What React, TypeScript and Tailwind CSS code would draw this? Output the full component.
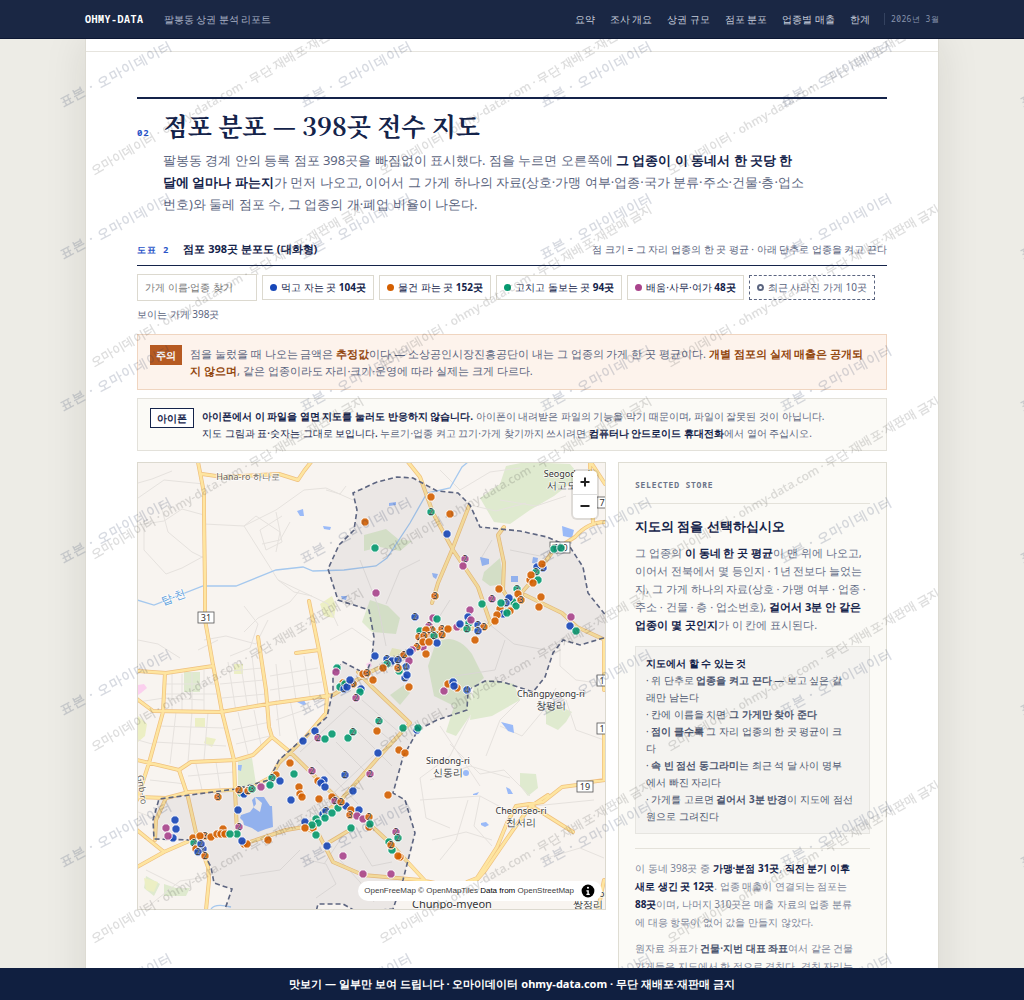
import type { ReactNode } from "react";

type Tone = "blue" | "orange" | "green" | "purple";
type Pin = [x: number, y: number, tone: Tone, count?: number];

const toneFill: Record<Tone, string> = {
  blue: "#1747b8",
  orange: "#d45f00",
  green: "#069a70",
  purple: "#a9448c",
};

const navItems = ["요약", "조사 개요", "상권 규모", "점포 분포", "업종별 매출", "한계"];

const filters: { label: string; count: string; dot: string }[] = [
  { label: "먹고 자는 곳", count: "104곳", dot: "bg-[#1747b8]" },
  { label: "물건 파는 곳", count: "152곳", dot: "bg-[#d45f00]" },
  { label: "고치고 돌보는 곳", count: "94곳", dot: "bg-[#069a70]" },
  { label: "배움·사무·여가", count: "48곳", dot: "bg-[#a9448c]" },
];

const minorRoads = [
  "M138 483l14-4 20-8M204 484l-40-4-26 18M204 515l-22-6-18 12-26 4M144 520v30l22 24 16-6 22-12M160 502l8 30 24 20 12 6",
  "M204 524l40 2 32-16 28-20 22-2 27 12M244 526l34 54 50 24 10 22M244 526l12-10 24 16-4 20M276 512l6 30-16 8-6-20 22-14",
  "M262 544l18-4 10-18M278 580l16 12 18 4M300 590l-10 12-32 16-14 14M244 606l14 18-8 24-20 8M204 640l22-4 30 8 12-24",
  "M326 490l14 4 6-8M330 640l22-12 20 14M204 700l-40-2-26 4M138 640l20 4 22 14M198 650l20-10",
  "M166 684h52M166 694h54M172 674v38M182 674v38M192 672v40M204 670v42M228 662l8 50M240 660l8 50M252 656l6 50",
  "M220 672l42-4M220 684l44-4M222 698l44-4M276 664l4 38M290 660l6 40M304 656l6 40M270 676l48-8M270 690l52-8",
  "M158 726l66 2M154 742l72 4M176 712l-6 52M192 712l-4 50M208 712l-4 48M232 730l38-8M236 744l34-8M238 712l10 42M254 710l8 40",
  "M276 720l34-12M290 700l8 40M276 700l4 36M300 752l50-46 40 34-64 60M316 760l42 44M336 742l38 38M352 726l40 40M362 700l46 40",
  "M138 740l14 4M150 780l36 4M196 764l6 26M216 762l4 26M188 776l46-4M138 812l16 6M146 870l40 20M150 905l30-24 26-4",
  "M440 470l20 20 30-18 30-4M500 500l36 6 30-10M470 505l26 6 30-8M360 560l18 46 8 40M505 640l-10 30-40 6",
  "M484 620l30 24 32 6 18-12M480 560l12-20M510 550l30 6 20-12M420 560l-20 10-14 34M450 600l-14 22",
  "M470 716l-20 40-30 22 6 40 24 10M450 744l30 30 24-4 26 26M430 780l40-14 40 12M420 800l60-4 30 16 20-8",
  "M440 726l40 60M500 726l22 10 20-24 14-24M560 640v26l16 14 28 4M566 700l10 30 28 10M468 800l-12 40-16 20",
  "M480 796l-6 30 18 20M432 840l34-8 26 8M520 700l-20 20-14 36M534 806l60-6M540 860l40-12 24 10",
  "M300 850l-20 20-40 6M300 858l26 6 10 20-20 14M360 846l12 20 20-4M340 860l20 22 14 20M344 834l-20 30",
];

const mainRoads = [
  "M198 462L204 493V515L205 587V620L209 642L213 665L218 690L222 712L234 760L235 790L237 832",
  "M202 474L223 477L279 474L298 480L304 471L311 462",
  "M258 637L266 690L269 727L272 737L290 752L336 797L376 830L390 843L428 884",
  "M309 601L319 650L327 695L326 713L303 740L279 763L271 777L249 789L189 792L166 798L137 797",
  "M296 653L319 650",
  "M137 671L166 673L213 666",
  "M165 673L163 712L149 763L137 800",
  "M137 699L153 711L221 712L268 704L333 695L346 687L366 674L387 664L410 651L428 634L450 628L484 629L498 617L512 604L530 583L553 551L575 537Q588 522 605 522",
  "M137 760L179 770L191 762L236 760L253 755L272 737",
  "M179 770L188 797L197 837L208 867L209 880L206 910",
  "M137 867L164 852L196 838L236 834L244 844L286 830L304 827L319 835L333 862L363 875L420 880L440 884",
  "M137 830L164 852",
  "M166 798L156 820L155 840",
  "M304 827L339 802L376 760L410 723L370 685L358 672",
  "M328 843L353 828",
  "M408 462L420 477L433 513L453 550L478 587L490 622",
  "M469 506L452 550L438 583L432 603",
  "M504 527L498 535L504 563L503 590L510 602",
  "M590 462V470L593 523M592 464L605 484",
  "M525 595L562 613L577 627L605 640",
  "M604 640V690M604 725V780M604 880L598 910",
  "M467 882L477 878L497 847L507 823L516 806L543 802L562 787L577 785L590 782L605 780",
  "M473 884L484 872L513 830L530 807L548 795",
  "M530 805L573 832",
];

const greens = [
  "M480 498l20-14 6-18 20-4 44 2 10 12-26 20-24 14-20 14-16-2z",
  "M364 535l22-6 12 10 14 2-12 10-20-4-16 4z",
  "M370 600l18 6 12 12-4 16-24-2-10-10z",
  "M484 572l16-14 4 26-14 2-8-6z",
  "M436 642q20-10 36 12l12 24-14 12 4 20-18 26-10-4 8-26-20-10-6-30z",
  "M474 684l16-4 24 4 6 16-28 16-22 4z",
  "M520 773l16 1 2 14-10 8-8-10z",
  "M184 672h16v20h-16z",
  "M238 760l14-2 4 26-18 4z",
  "M546 710l14-4 12 6-6 10-8 8-12-6z",
  "M146 876l14 8-6 12-10-8zM164 884l12 4 14 0-4 8-22 0z",
  "M390 695l14-10 6 8-10 12z",
];

const yellowGreens = [
  "M320 604l12-8 4 10-2 12-10-2z",
  "M234 664h9v10h-9z",
  "M195 718h10v9h-10zM206 737l10 2-4 8-8-4z",
  "M138 716l9 8-2 12-7 6z",
  "M144 878l14 4-4 10-8-2z",
  "M392 648l10 2-4 10-10-2z",
];

const waters = [
  "M241 815l9-3 6-8-1-7 9 0 6 9 2 0 1 21-7 2-8 3-6-4-8-3-1-4-3-3zM255 797l-3 3 2 8 6 4 2-9z",
  "M297 511l6-2 1 7-4 0zM323 526l8 1-1 3-6-1z",
  "M341 596l6 0-1 4-4-1z",
  "M562 526l12 4-2 8-9-2z",
  "M480 557l9 2 0 5-7 2zM511 576l7 0 0 6-7 0zM533 557l5 1-1 6-5-1z",
  "M432 573l6 1-2 5-3-2zM389 503l7-1 0 3-7 1z",
  "M501 722l12 3 1 8-6-2zM506 787l4 2 3 5-5 0zM473 794l6-2-2 3-4 0zM481 823l5-1 3 3-4 2-4-2z",
  "M297 702l7-2 2 4-3 1zM238 765l4 0-1 6-3-1z",
];

const district =
  "M377 482L353 493L357 510L354 530L339 545L328 569L338 600L369 610L374 637L372 658L366 674L343 662L333 673L333 690L327 717L279 760L269 780L236 789L159 799L153 820L154 839L191 840L202 850L211 867L214 883L232 889L224 912L316 912L318 904L343 904L357 912L393 909L403 880L415 833L405 800L393 793L403 757L418 730L437 720L467 710L468 690L485 681L503 682L533 692L545 677L553 653L563 640L580 645L607 637V617L588 593L583 567L570 547L547 537L520 531L480 527L470 505L458 493L437 491L413 478L397 477Z";

const pins: Pin[] = [
  [431, 497, "orange"], [431, 512, "green", 2], [450, 514, "orange"], [447, 534, "blue"], [375, 548, "green"],
  [365, 522, "orange"], [465, 559, "purple", 2], [463, 566, "purple"], [376, 593, "purple"], [435, 596, "orange", 3],
  [499, 589, "orange"], [554, 549, "green"], [561, 548, "green"], [543, 568, "blue", 2], [537, 567, "blue"],
  [542, 564, "orange"], [536, 572, "green", 2], [530, 580, "orange"], [531, 575, "orange"], [538, 580, "green"],
  [533, 583, "orange"], [492, 599, "purple", 2], [482, 604, "green"], [541, 597, "orange"], [539, 607, "orange"],
  [571, 617, "purple"], [570, 626, "blue"], [576, 631, "green"], [517, 589, "green", 3], [518, 594, "orange"],
  [513, 602, "green"], [516, 606, "green"], [521, 600, "orange", 3], [509, 598, "blue"], [506, 603, "blue", 2],
  [510, 611, "orange"], [500, 609, "orange"], [501, 603, "green"], [503, 614, "blue"], [507, 613, "green"],
  [497, 615, "orange"], [495, 621, "orange"], [470, 610, "purple"], [468, 617, "blue"], [469, 623, "green"],
  [471, 620, "purple"], [457, 627, "purple"], [460, 624, "blue"], [467, 629, "green", 2], [478, 625, "blue", 2],
  [484, 627, "orange", 2], [478, 631, "blue", 2], [475, 640, "orange"], [415, 617, "blue", 2], [433, 618, "purple"],
  [437, 619, "green"], [429, 626, "purple", 2], [420, 631, "green"], [432, 630, "orange", 4], [426, 630, "orange"],
  [442, 629, "orange", 3], [448, 629, "orange"], [429, 636, "orange", 2], [437, 635, "orange"], [442, 635, "orange", 2],
  [434, 636, "green", 2], [419, 637, "orange", 2], [424, 636, "orange", 3], [423, 647, "purple"], [417, 647, "orange", 2],
  [437, 643, "blue"], [423, 642, "orange"], [429, 642, "orange"], [426, 654, "orange"], [404, 655, "orange", 2],
  [412, 650, "purple"], [410, 652, "blue"], [375, 656, "blue"], [387, 659, "blue", 2], [392, 661, "blue"],
  [398, 660, "blue", 2], [387, 664, "green", 3], [409, 661, "purple"], [406, 667, "blue", 4], [399, 671, "green"],
  [398, 668, "orange", 3], [405, 678, "blue", 2], [407, 675, "blue"], [383, 668, "orange"], [373, 680, "orange"],
  [363, 674, "orange"], [367, 673, "orange", 3], [337, 668, "green"], [336, 672, "purple"], [343, 683, "orange"],
  [340, 687, "green"], [345, 684, "green"], [353, 684, "orange", 3], [344, 689, "blue", 3], [347, 687, "blue"],
  [350, 680, "blue"], [361, 689, "blue"], [360, 692, "green"], [356, 698, "purple", 2], [409, 687, "orange"],
  [444, 691, "purple"], [448, 684, "orange"], [457, 688, "orange"], [453, 682, "blue"], [454, 686, "blue"],
  [467, 690, "blue", 4], [379, 721, "green", 2], [377, 731, "orange"], [403, 728, "green"], [417, 730, "blue"],
  [418, 728, "green"], [378, 753, "blue"], [399, 750, "orange"], [405, 753, "orange"], [388, 795, "orange"],
  [315, 731, "blue"], [303, 741, "blue"], [318, 738, "purple", 2], [325, 739, "green"], [332, 734, "green"],
  [348, 738, "green"], [353, 732, "green", 2], [290, 763, "orange"], [294, 774, "green"], [312, 771, "purple", 2],
  [345, 775, "blue", 2], [370, 774, "purple", 2], [318, 781, "orange"], [324, 780, "blue"], [321, 783, "blue"],
  [325, 787, "blue"], [299, 787, "orange"], [300, 794, "orange"], [302, 797, "orange"], [291, 800, "blue"],
  [319, 799, "orange"], [353, 791, "blue"], [332, 797, "orange"], [335, 801, "purple", 2], [338, 808, "green"],
  [346, 806, "blue"], [341, 802, "orange", 2], [351, 810, "orange"], [350, 815, "orange", 3], [359, 810, "blue"],
  [357, 816, "purple"], [363, 819, "purple"], [369, 827, "orange"], [369, 817, "orange", 2], [370, 824, "green"],
  [351, 828, "green"], [323, 814, "blue", 3], [326, 811, "blue", 2], [332, 813, "green"], [325, 818, "green"],
  [316, 819, "green"], [318, 823, "green"], [305, 822, "blue"], [313, 828, "orange"], [312, 825, "green"],
  [305, 828, "orange"], [316, 835, "green"], [327, 846, "blue"], [343, 856, "purple"], [363, 874, "purple"],
  [391, 874, "purple"], [396, 832, "purple", 2], [398, 838, "green", 2], [389, 842, "green"], [392, 850, "green"],
  [391, 845, "orange", 2], [400, 857, "orange"], [398, 856, "orange"], [276, 775, "orange"], [272, 778, "green", 2],
  [280, 781, "blue"], [270, 785, "green"], [261, 787, "purple"], [241, 793, "green"], [244, 794, "blue"],
  [248, 791, "orange", 2], [252, 789, "green", 3], [239, 790, "orange", 2], [218, 797, "orange", 3], [238, 810, "blue"],
  [239, 827, "purple", 2], [175, 820, "blue"], [176, 829, "blue"], [166, 828, "purple"], [173, 838, "blue"],
  [168, 836, "purple"], [193, 838, "orange"], [194, 843, "green", 2], [205, 836, "orange", 3], [200, 836, "orange"],
  [211, 837, "orange"], [217, 834, "orange"], [223, 829, "orange"], [221, 834, "orange"], [225, 834, "orange"],
  [237, 834, "green"], [230, 834, "green"], [196, 849, "orange"], [203, 849, "blue", 2], [201, 844, "blue", 2],
  [198, 852, "blue", 2], [205, 856, "orange", 2], [244, 844, "orange"], [247, 844, "orange"], [242, 841, "blue"],
  [268, 840, "orange"],
];

const places: { x: number; y: number; lines: string[] }[] = [
  { x: 567, y: 477, lines: ["Seogodo-ri", "서고도리"] },
  { x: 551, y: 697, lines: ["Changpyeong-ri", "창평리"] },
  { x: 448, y: 764, lines: ["Sindong-ri", "신동리"] },
  { x: 521, y: 814, lines: ["Cheonseo-ri", "천서리"] },
];

const shields: [number, number, string][] = [
  [206, 617, "31"],
  [560, 547, "720"],
  [605, 502, "7"],
  [605, 680, "1"],
  [605, 728, "1"],
  [585, 786, "19"],
];

function Ink({ children }: { children: ReactNode }) {
  return <strong className="font-bold text-[#14234a]">{children}</strong>;
}

function StoreMap() {
  return (
    <svg
      viewBox="138 463 467 446"
      className="block h-auto w-full bg-[#f8f4f0]"
      role="img"
      aria-label="점포 398곳 분포도"
      fontFamily="'Noto Sans', sans-serif"
    >
      <g fill="#dfeacf">
        {greens.map((d) => (
          <path key={d} d={d} />
        ))}
      </g>
      <g fill="#ecefc4">
        {yellowGreens.map((d) => (
          <path key={d} d={d} />
        ))}
      </g>
      <path d="M138 685l6-1 3 4-6 5-3 2zM366 664l4-2 2 4-4 2z" fill="#fbd0ee" />
      <path d={minorRoads.join("")} fill="none" stroke="#e6e2de" strokeWidth="1" />
      <path
        d="M137 600L154 605L203 586L236 586L276 570L303 567L313 571L344 570L376 566L387 558L410 523L427 493L450 488L462 467L468 462M211 909q4-6 20-2"
        fill="none"
        stroke="#a5c8ee"
        strokeWidth="1.3"
      />
      <g fill="#9abaf8" fillRule="evenodd">
        {waters.map((d) => (
          <path key={d} d={d} />
        ))}
        <circle cx="466" cy="773" r="3" />
      </g>
      <g fill="none" strokeLinecap="round" strokeLinejoin="round">
        <path d={mainRoads.join("")} stroke="#efc07f" strokeWidth="4" />
        <path d={mainRoads.join("")} stroke="#fee5a0" strokeWidth="2.6" />
      </g>
      <path d={district} fill="#1a2744" fillOpacity="0.06" stroke="#5d6580" strokeWidth="1.6" strokeDasharray="5 3" />

      <g fontSize="9" fill="#333" textAnchor="middle">
        {shields.map(([x, y, label]) => (
          <g key={`${x}-${y}`}>
            <rect x={x - (label.length > 2 ? 10 : 8)} y={y - 5} width={label.length > 2 ? 20 : 16} height="11" fill="#fff" stroke="#555" strokeWidth="0.8" />
            <text x={label.length > 1 ? x : x - 3} y={y + 4}>
              {label}
            </text>
          </g>
        ))}
      </g>
      <g fontSize="9" fill="#333" stroke="#fff" strokeOpacity="0.8" strokeWidth="1.5" paintOrder="stroke" textAnchor="middle">
        {places.map((place) => (
          <text key={place.lines[0]} x={place.x} y={place.y}>
            <tspan>{place.lines[0]}</tspan>
            <tspan x={place.x} dy="12" fontSize="10">
              {place.lines[1]}
            </tspan>
          </text>
        ))}
        <text x="248" y="480" fill="#6b6660">
          Hana-ro 하나로
        </text>
        <text x="452" y="908" fontSize="11">
          Chunpo-myeon
        </text>
        <text x="591" y="897">
          <tspan>Ssangjeong</tspan>
          <tspan x="588" dy="11" fontSize="10">
            쌍정리
          </tspan>
        </text>
        <text transform="translate(175 601) rotate(-20)" fill="#5d9fdc" fontSize="11">
          탑·천
        </text>
        <text transform="translate(139 790) rotate(82)" fill="#6b6660">
          Gnb-ro
        </text>
      </g>

      {pins.map(([x, y, tone, count], i) => (
        <g key={i}>
          <circle cx={x} cy={y} r="4.200" fill={toneFill[tone]} fillOpacity="0.9" stroke="#fff" strokeWidth="1" />
          {count && (
            <text x={x} y={y + 3} fontSize="8" textAnchor="middle" fill="#333" stroke="#fff" strokeOpacity="0.5" strokeWidth="1" paintOrder="stroke">
              {count}
            </text>
          )}
        </g>
      ))}
    </svg>
  );
}

function MapPanel() {
  return (
    <div className="relative overflow-hidden border border-[#dcd9cf]">
      <StoreMap />
      <div className="absolute top-2 right-2 flex w-6 flex-col overflow-hidden rounded bg-white ring-2 ring-black/10">
        <button type="button" aria-label="확대" className="flex h-[23px] items-center justify-center">
          <svg viewBox="0 0 24 24" className="size-6" stroke="#222" strokeWidth="2">
            <path d="M12 7.500v9M7.500 12h9" />
          </svg>
        </button>
        <button type="button" aria-label="축소" className="flex h-6 items-center justify-center border-t border-[#ddd]">
          <svg viewBox="0 0 24 24" className="size-6" stroke="#222" strokeWidth="2">
            <path d="M7.500 12h9" />
          </svg>
        </button>
      </div>
      <div className="absolute right-[3px] bottom-2 flex h-5 items-center gap-1.5 rounded-full bg-white pr-1.5 pl-1.5 font-['Liberation_Sans',sans-serif] text-[8px] whitespace-nowrap text-black">
        <p>
          <a href="#openfreemap" className="text-[#404040]">OpenFreeMap</a>{" "}
          <a href="#openmaptiles" className="text-[#404040]">© OpenMapTiles</a> Data from{" "}
          <a href="#osm" className="text-[#404040]">OpenStreetMap</a>
        </p>
        <svg viewBox="0 0 20 20" className="size-4" aria-hidden="true">
          <circle cx="10" cy="10" r="8" fill="#000" />
          <circle cx="10" cy="6" r="1.300" fill="#fff" />
          <path d="M8 9h3v4.500h1.200V15H8v-1.500h1.200v-3H8z" fill="#fff" />
        </svg>
      </div>
    </div>
  );
}

function DetailPanel() {
  return (
    <aside className="border border-[#dfddd3] bg-[#fbfaf6] px-4 pt-4 pb-6 text-[#667089]">
      <p className="border-b border-[#e4e2da] pb-3 font-['Noto_Sans_Mono',monospace] text-[8px] leading-3 font-bold tracking-widest text-[#6b7489]">
        SELECTED STORE
      </p>
      <h3 className="mt-3 text-[13px] leading-5 font-bold text-[#14234a]">지도의 점을 선택하십시오</h3>
      <p className="mt-2 text-[11px] leading-[18px] break-all">
        그 업종의 <Ink>이 동네 한 곳 평균</Ink>이 맨 위에 나오고, 이어서 전북에서 몇 등인지 · 1년 전보다 늘었는지, 그 가게 하나의
        자료(상호 · 가맹 여부 · 업종 · 주소 · 건물 · 층 · 업소번호), <Ink>걸어서 3분 안 같은 업종이 몇 곳인지</Ink>가 이 칸에
        표시된다.
      </p>
      <div className="mt-3 border border-[#e6e5e0] bg-[#f4f3f0] px-2.5 py-2 text-[10px] leading-[17px] text-[#4c566f]">
        <p className="font-bold text-[#14234a]">지도에서 할 수 있는 것</p>
        <p>
          · 위 단추로 <b>업종을 켜고 끈다</b> — 보고 싶은 갈
          <br />
          래만 남는다
        </p>
        <p>
          · 칸에 이름을 치면 <b>그 가게만 찾아 준다</b>
        </p>
        <p>
          · <b>점이 클수록</b> 그 자리 업종의 한 곳 평균이 크
          <br />다
        </p>
        <p>
          · <b>속 빈 점선 동그라미</b>는 최근 석 달 사이 명부
          <br />
          에서 빠진 자리다
        </p>
        <p>
          · 가게를 고르면 <b>걸어서 3분 반경</b>이 지도에 점선
          <br />
          원으로 그려진다
        </p>
      </div>
      <div className="mt-3.5 border-t border-[#e4e2da] pt-2.5 text-[10px] leading-[18px] text-[#7d8599]">
        <p>
          이 동네 398곳 중 <Ink>가맹·분점 31곳</Ink>, <Ink>직전 분기 이후</Ink>
          <br />
          <Ink>새로 생긴 곳 12곳</Ink>. 업종 매출이 연결되는 점포는
          <br />
          <Ink>88곳</Ink>이며, 나머지 310곳은 매출 자료의 업종 분류
          <br />에 대응 항목이 없어 값을 만들지 않았다.
        </p>
        <p className="mt-2">
          원자료 좌표가 <b className="text-[#4c566f]">건물·지번 대표 좌표</b>여서 같은 건물
          <br />
          가게들은 지도에서 한 점으로 겹친다. 겹친 자리는
        </p>
      </div>
    </aside>
  );
}

function SiteWatermark() {
  return (
    <svg className="pointer-events-none absolute inset-0 size-full" aria-hidden="true">
      <defs>
        <pattern id="wm-site" width="240" height="152" x="50" y="-9" patternUnits="userSpaceOnUse">
          <text transform="translate(13 77) rotate(-28)" fontSize="13" fontWeight="700" letterSpacing="1" fill="#14234a" fillOpacity="0.17">
            표본 · 오마이데이터
          </text>
        </pattern>
      </defs>
      <rect width="100%" height="100%" fill="url(#wm-site)" />
    </svg>
  );
}

function PaperWatermark() {
  return (
    <svg className="pointer-events-none absolute inset-0 size-full" aria-hidden="true">
      <defs>
        <pattern id="wm-paper" width="288" height="192" x="0" y="-47" patternUnits="userSpaceOnUse">
          <text transform="translate(8 183) rotate(-30)" fontSize="12" fontWeight="600" fill="#222" fillOpacity="0.15">
            오마이데이터 · ohmy-data.com · 무단 재배포·재판매 금지
          </text>
        </pattern>
      </defs>
      <rect width="100%" height="100%" fill="url(#wm-paper)" />
    </svg>
  );
}

export default function App() {
  return (
    <div className="flex h-screen flex-col bg-[#edece6] font-['Noto_Sans',sans-serif] text-[#5b6580]">
      <header className="shrink-0 border-b border-[#0c1733] bg-[#1a2744]">
        <div className="mx-auto flex h-[38px] max-w-[854px] items-center text-[10px]">
          <strong className="font-['Noto_Sans_Mono',monospace] tracking-wider text-white">OHMY-DATA</strong>
          <span className="ml-5 text-[#a9b2c6]">팔봉동 상권 분석 리포트</span>
          <nav className="ml-auto flex gap-[15px] font-medium text-[#c6cddb]">
            {navItems.map((item) => (
              <a key={item} href={`#${item}`}>
                {item}
              </a>
            ))}
          </nav>
          <span className="ml-3.5 border-l border-[#34425f] pl-1.5 font-['Noto_Sans_Mono',monospace] text-[8px] tracking-wider text-[#8894ad]">
            2026년 3월
          </span>
        </div>
      </header>

      <div className="relative min-h-0 flex-1">
        <main className="h-full overflow-y-auto [scrollbar-width:none]">
          <div className="relative mx-auto max-w-[854px] border-x border-[#dddbd3] bg-white shadow-[0_0_40px_rgba(30,30,20,0.1)]">
            <div className="h-[13px] border-b border-[#e6e4de]" />
            <section className="px-[51px] pt-[45px] pb-10">
              <div className="flex items-baseline gap-3.5 border-t-2 border-[#14234a] pt-2">
                <span className="font-['Noto_Sans_Mono',monospace] text-[9px] font-bold tracking-widest text-[#2a55c8]">02</span>
                <h2 className="font-['Noto_Serif_CJK_KR','Noto_Sans_CJK_KR',serif] text-[25px] leading-9 font-bold text-[#14234a]">
                  점포 분포 — 398곳 전수 지도
                </h2>
              </div>
              <p className="mt-1.5 ml-[26px] max-w-[643px] text-[13px] leading-[22px] break-all">
                팔봉동 경계 안의 등록 점포 398곳을 빠짐없이 표시했다. 점을 누르면 오른쪽에{" "}
                <Ink>그 업종이 이 동네서 한 곳당 한 달에 얼마나 파는지</Ink>가 먼저 나오고, 이어서 그 가게 하나의 자료(상호·가맹
                여부·업종·국가 분류·주소·건물·층·업소번호)와 둘레 점포 수, 그 업종의 개·폐업 비율이 나온다.
              </p>

              <div className="mt-[26px] flex items-baseline border-b border-[#14234a] pb-[7px]">
                <span className="font-['Noto_Sans_Mono',monospace] text-[9px] font-bold tracking-widest text-[#2a55c8]">도표 2</span>
                <h3 className="ml-3.5 text-[11px] font-bold text-[#14234a]">점포 398곳 분포도 (대화형)</h3>
                <p className="ml-auto text-[10px]">점 크기 = 그 자리 업종의 한 곳 평균 · 아래 단추로 업종을 켜고 끈다</p>
              </div>

              <div className="mt-2 flex flex-wrap items-center gap-x-[5px] gap-y-[3px] text-[10px]">
                <input
                  type="text"
                  aria-label="가게 이름·업종 찾기"
                  placeholder="가게 이름·업종 찾기"
                  className="h-[27px] w-[120px] border border-[#dcd9cf] bg-white px-[7px] placeholder:text-[#777]"
                />
                {filters.map((filter) => (
                  <button
                    key={filter.label}
                    type="button"
                    className="flex h-[25px] items-center gap-1 border border-[#dcd9cf] bg-white px-[7px] text-[#14234a]"
                  >
                    <span className={`size-[7px] rounded-full ${filter.dot}`} />
                    <span>
                      {filter.label} <b>{filter.count}</b>
                    </span>
                  </button>
                ))}
                <button type="button" className="flex h-[25px] items-center gap-1 border border-dashed border-[#5b6580] bg-white px-[7px]">
                  <span className="size-[7px] rounded-full border-2 border-[#5b6580]" />
                  최근 사라진 가게 10곳
                </button>
                <p className="w-full leading-5">보이는 가게 398곳</p>
              </div>

              <div className="mt-2.5 flex items-start gap-2 border border-[#f0d5c0] bg-[#fdf3ec] px-3 py-2.5">
                <span className="shrink-0 bg-[#b65a22] px-1.5 text-[10px] leading-5 font-bold text-white">주의</span>
                <p className="text-[11px] leading-[17px] break-all">
                  점을 눌렀을 때 나오는 금액은 <b className="text-[#93480f]">추정값</b>이다 — 소상공인시장진흥공단이 내는 그 업종의
                  가게 한 곳 평균이다. <b className="text-[#93480f]">개별 점포의 실제 매출은 공개되</b>
                  <br />
                  <b className="text-[#93480f]">지 않으며</b>, 같은 업종이라도 자리·크기·운영에 따라 실제는 크게 다르다.
                </p>
              </div>

              <div className="mt-2 flex items-start gap-2 border border-[#e3e1da] bg-[#fbfaf6] px-3 pt-[9px] pb-2 text-[10px] leading-[17px]">
                <span className="shrink-0 border border-[#14234a] bg-white px-1.5 leading-[18px] font-bold text-[#14234a]">아이폰</span>
                <p>
                  <Ink>아이폰에서 이 파일을 열면 지도를 눌러도 반응하지 않습니다.</Ink> 아이폰이 내려받은 파일의 기능을 막기
                  때문이며, 파일이 잘못된 것이 아닙니다.
                  <br />
                  <b className="font-medium text-[#14234a]">지도 그림과 표·숫자는 그대로 보입니다.</b> 누르기·업종 켜고
                  끄기·가게 찾기까지 쓰시려면 <Ink>컴퓨터나 안드로이드 휴대전화</Ink>에서 열어 주십시오.
                </p>
              </div>

              <div className="mt-[11px] grid grid-cols-[minmax(0,1fr)_269px] items-start gap-3">
                <MapPanel />
                <DetailPanel />
              </div>
            </section>
            <PaperWatermark />
          </div>
        </main>
        <SiteWatermark />
      </div>

      <footer className="flex h-8 shrink-0 items-center justify-center bg-[#101f40] text-[11px] font-bold text-white">
        맛보기 — 일부만 보여 드립니다 · 오마이데이터 ohmy-data.com · 무단 재배포·재판매 금지
      </footer>
    </div>
  );
}
